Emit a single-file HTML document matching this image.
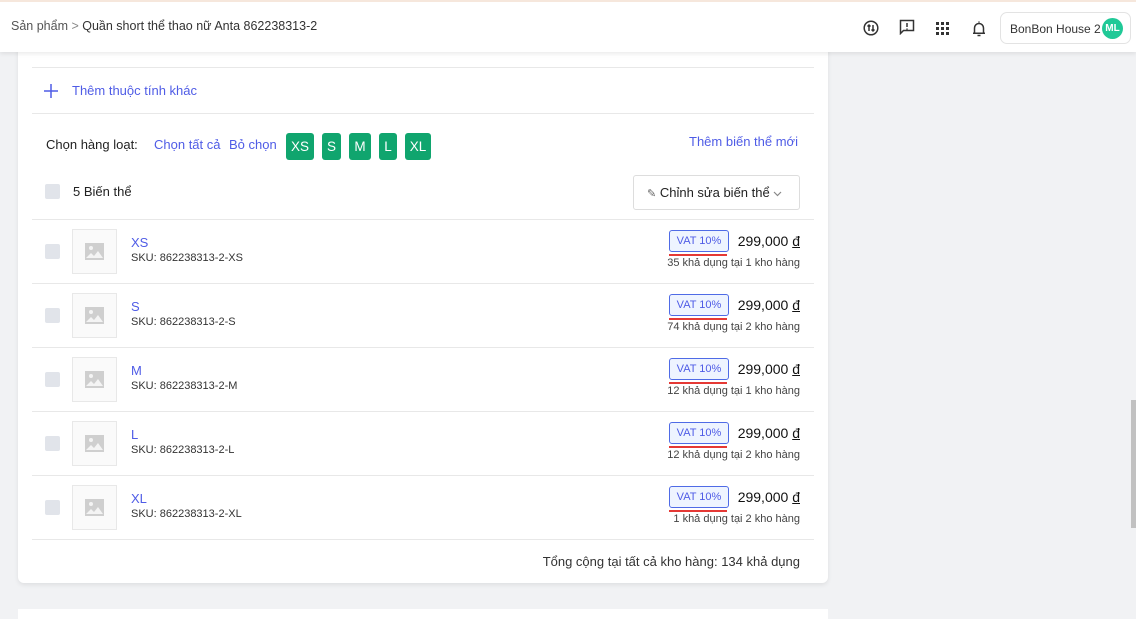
<!DOCTYPE html>
<html><head><meta charset="utf-8"><style>
*{box-sizing:border-box;margin:0;padding:0}
body{width:1136px;height:612px;overflow:hidden;background:#f1f2f4;font-family:"Liberation Sans",sans-serif;color:#222;position:relative;font-size:13px}
.hdr{position:absolute;left:0;top:0;width:1136px;height:52px;background:#fff;border-top:2px solid #f6e7dc;box-shadow:0 2px 4px rgba(0,0,0,.08);z-index:2}
.bc{position:absolute;left:11px;top:17px;font-size:12.5px;color:#333}
.bc .g{color:#555}
.ic{position:absolute;top:18px}
.acct{position:absolute;left:1000px;top:10px;width:131px;height:32px;border:1px solid #e3e3e3;border-radius:7px;font-size:12px;padding:9px 0 0 9px;color:#333;white-space:nowrap}
.av{position:absolute;right:7px;top:5px;width:21px;height:21px;border-radius:50%;background:#20c997;color:#fff;font-size:10px;font-weight:bold;text-align:center;line-height:21px}
.card{position:absolute;left:18px;top:40px;width:810px;height:543px;background:#fff;border-radius:0 0 6px 6px;box-shadow:0 2px 5px rgba(0,0,0,.08)}
.card2{position:absolute;left:18px;top:609px;width:810px;height:10px;background:#fff}
.ln{position:absolute;left:14px;width:782px;height:1px;background:#e8e8e8}
.t{position:absolute;white-space:nowrap}
.blue{color:#4f5ce6}
.sz{position:absolute;top:93px;height:27px;background:#10a56e;color:#fff;border-radius:3px;font-size:13.5px;text-align:center;line-height:27px}
.cb{position:absolute;left:27px;width:15px;height:15px;background:#e1e4ea;border-radius:2px}
.img{position:absolute;left:54px;width:45px;height:45px;border:1px solid #e8e8e8;background:#fafafa}
.vat{position:absolute;left:651px;width:60px;height:22px;border:1px solid #4f6be6;border-radius:3px;background:#eef4ff;color:#4f5ce6;font-size:11px;text-align:center;line-height:20px}
.ul{position:absolute;left:651px;width:58px;height:2px;background:#e53935}
.pr{position:absolute;right:28px;font-size:14px;color:#111}
.st{position:absolute;right:28px;font-size:11px;color:#444}
</style></head><body>
<div class="hdr">
<div class="bc"><span class="g">Sản phẩm</span> <span style="color:#888">&gt;</span> Quần short thể thao nữ Anta 862238313-2</div>
<svg class="ic" style="left:863px;top:18px" width="16" height="16" viewBox="0 0 16 16" fill="none" stroke="#333" stroke-width="1.5"><circle cx="8" cy="8" r="6.8"/><path d="M6 11V5M4.5 6.5L6 5l1.5 1.5M10 5v6M8.5 9.5L10 11l1.5-1.5"/></svg>
<svg class="ic" style="left:899px;top:17px" width="16" height="16" viewBox="0 0 16 16" fill="none" stroke="#333" stroke-width="1.5"><path d="M1.5 1.5h13v10h-10l-3 3z"/><path d="M8 4v4M8 9.5v1.2"/></svg>
<svg class="ic" style="left:936px;top:20px" width="13" height="13" viewBox="0 0 13 13" fill="#333"><rect x="0" y="0" width="3" height="3"/><rect x="5" y="0" width="3" height="3"/><rect x="10" y="0" width="3" height="3"/><rect x="0" y="5" width="3" height="3"/><rect x="5" y="5" width="3" height="3"/><rect x="10" y="5" width="3" height="3"/><rect x="0" y="10" width="3" height="3"/><rect x="5" y="10" width="3" height="3"/><rect x="10" y="10" width="3" height="3"/></svg>
<svg class="ic" style="left:972px;top:18px" width="14" height="17" viewBox="0 0 14 17" fill="none" stroke="#333" stroke-width="1.5"><path d="M7 1.5v1M2.5 13V8a4.5 4.5 0 019 0v5M1 13.2h12M5.5 15.5h3"/></svg>
<div class="acct">BonBon House 2<div class="av">ML</div></div>
</div>
<div class="card">
<div class="ln" style="top:27px"></div>
<svg style="position:absolute;left:26px;top:44px" width="14" height="14" viewBox="0 0 14 14" stroke="#4f5ce6" stroke-width="1.5"><path d="M7 0v14M0 7h14"/></svg>
<div class="t blue" style="left:54px;top:43px">Thêm thuộc tính khác</div>
<div class="ln" style="top:73px"></div>
<div class="t" style="left:28px;top:97px">Chọn hàng loạt:</div>
<div class="t blue" style="left:136px;top:97px">Chọn tất cả</div>
<div class="t blue" style="left:211px;top:97px">Bỏ chọn</div>
<div class="sz" style="left:268px;width:28px">XS</div>
<div class="sz" style="left:304px;width:19px">S</div>
<div class="sz" style="left:331px;width:22px">M</div>
<div class="sz" style="left:361px;width:18px">L</div>
<div class="sz" style="left:387px;width:26px">XL</div>
<div class="t blue" style="left:671px;top:94px">Thêm biến thể mới</div>
<div class="cb" style="top:144px"></div>
<div class="t" style="left:55px;top:144px">5 Biến thể</div>
<div style="position:absolute;left:615px;top:135px;width:167px;height:35px;border:1px solid #ddd;border-radius:3px;padding:9px 0 0 13px;font-size:13px;white-space:nowrap"><span style="color:#666;font-size:11px">✎</span> Chỉnh sửa biến thể <svg width="9" height="6" viewBox="0 0 9 6" fill="none" stroke="#888" stroke-width="1.2" style="vertical-align:middle"><path d="M1 1l3.5 3.5L8 1"/></svg></div>
<div class="ln" style="top:179px"></div>
<div id="rows"></div>
<div class="ln" style="top:499px"></div>
<div class="t" style="right:28px;top:514px;font-size:13px;color:#333">Tổng cộng tại tất cả kho hàng: 134 khả dụng</div>
</div>
<div class="card2"></div>
<div style="position:absolute;left:1131px;top:400px;width:5px;height:128px;background:#c1c1c1"></div>
<script>
var d=[["XS","35 khả dụng tại 1 kho hàng"],["S","74 khả dụng tại 2 kho hàng"],["M","12 khả dụng tại 1 kho hàng"],["L","12 khả dụng tại 2 kho hàng"],["XL","1 khả dụng tại 2 kho hàng"]],h="";
d.forEach(function(r,i){var y=179+i*64;
h+='<div class="cb" style="top:'+(y+25)+'px"></div>'+
'<div class="img" style="top:'+(y+10)+'px"><svg style="position:absolute;left:12px;top:13px" width="19" height="17" viewBox="0 0 19 17"><rect width="19" height="17" fill="#cfcfcf"/><circle cx="6" cy="5" r="2" fill="#f4f4f4"/><path d="M1 15l5-5 3 3 4-5 5 7z" fill="#f4f4f4"/></svg></div>'+
'<div class="t blue" style="left:113px;top:'+(y+16)+'px;font-size:13px">'+r[0]+'</div>'+
'<div class="t" style="left:113px;top:'+(y+33)+'px;font-size:11px;color:#333">SKU: 862238313-2-'+r[0]+'</div>'+
(i>0?'<div class="ln" style="top:'+y+'px"></div>':'')+
'<div class="vat" style="top:'+(y+11)+'px">VAT 10%</div><div class="ul" style="top:'+(y+35)+'px"></div>'+
'<div class="pr" style="top:'+(y+14)+'px">299,000 <u>đ</u></div>'+
'<div class="st" style="top:'+(y+38)+'px">'+r[1]+'</div>';});
document.getElementById("rows").innerHTML=h;
</script>
</body></html>
